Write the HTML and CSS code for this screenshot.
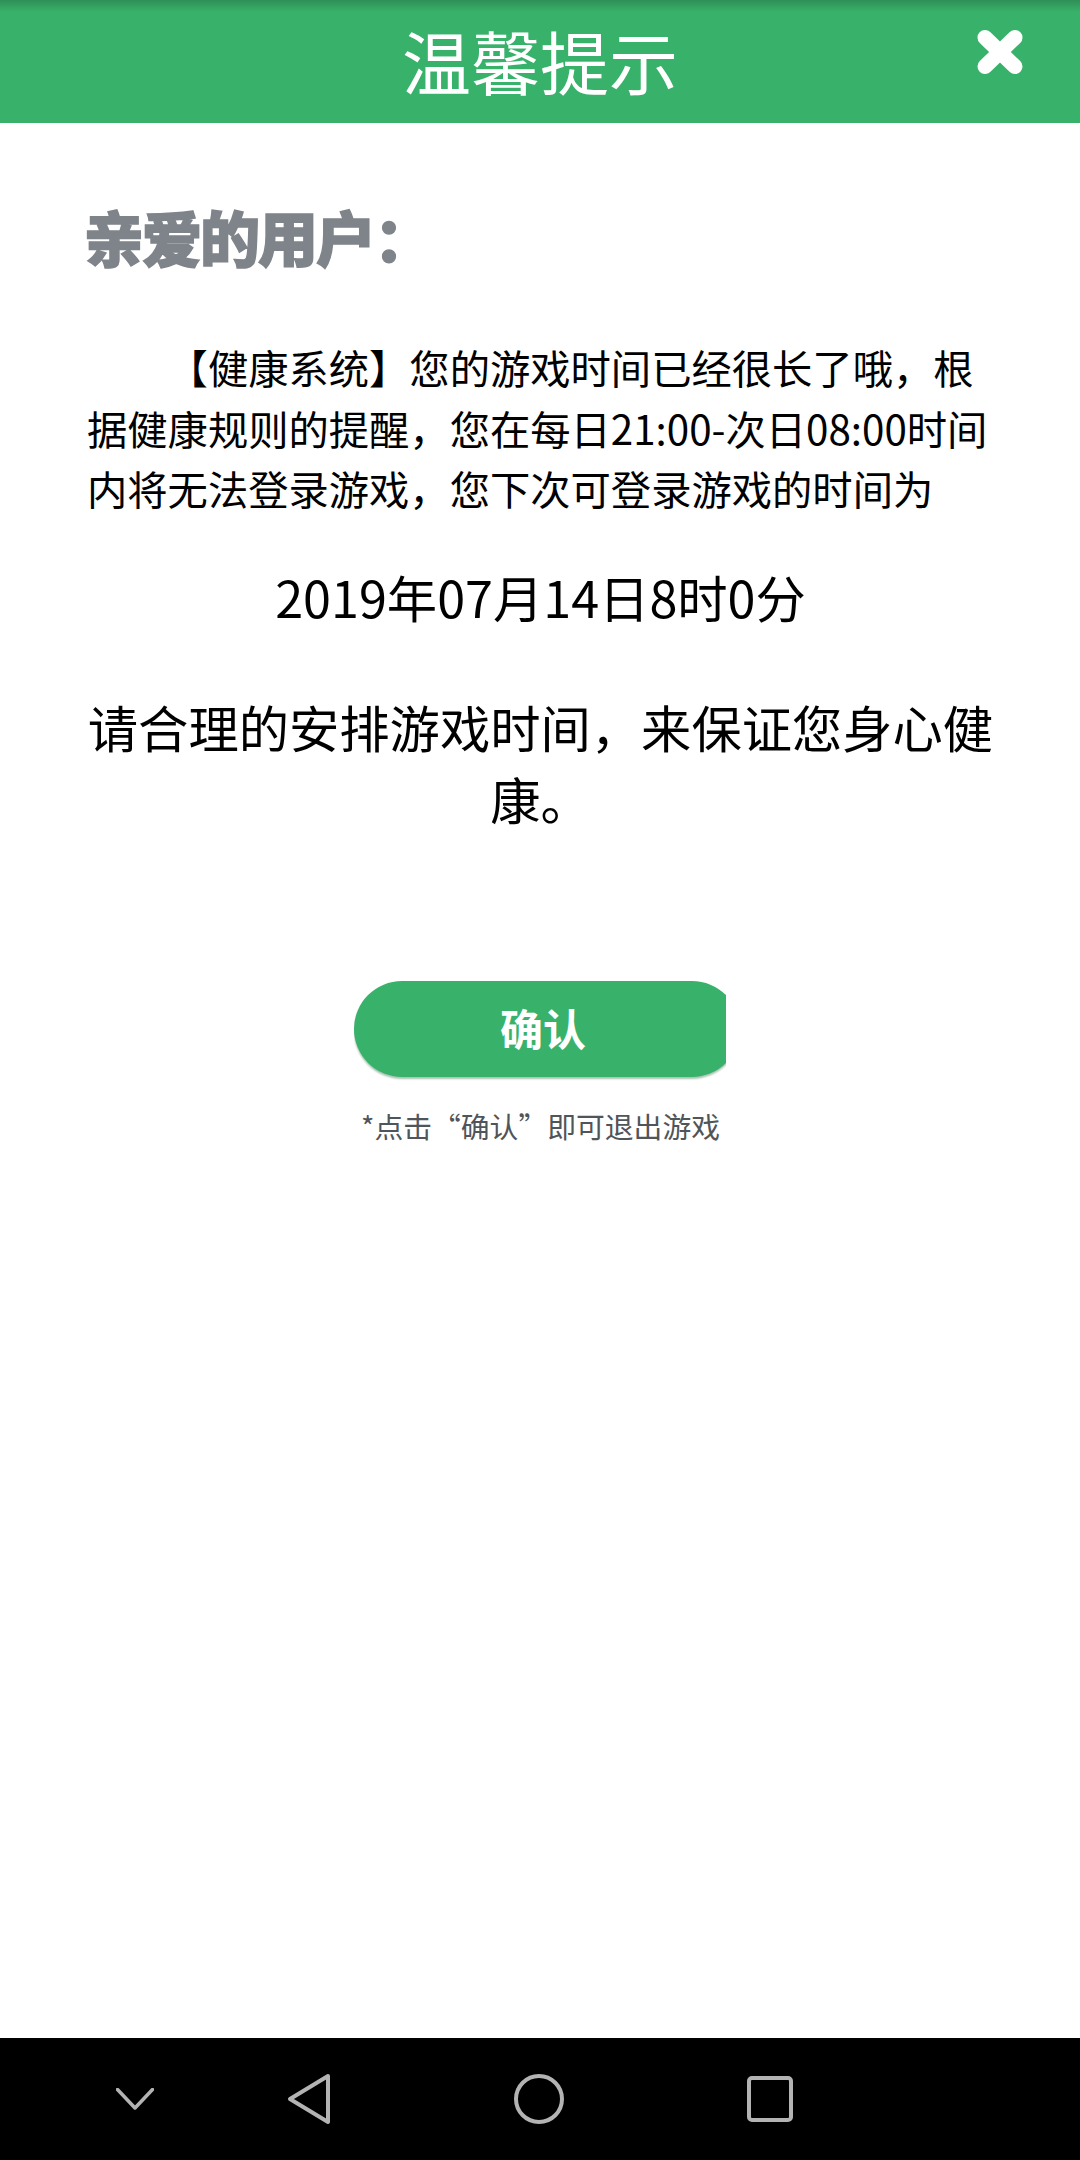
FILE: index.html
```html
<!DOCTYPE html>
<html lang="zh-CN">
<head>
    <meta charset="UTF-8" />
    <title>温馨提示</title>
    <link rel="stylesheet" href="styles.css">
</head>
<body>
    <header class="title-bar">
        <h1>温馨提示</h1>
        <button type="button" class="close-button" aria-label="关闭">
            <svg width="46" height="44" viewBox="0 0 46 44">
                <path d="M8 7.500 L38 36.500 M38 7.500 L8 36.500" fill="none" stroke="#fff" stroke-width="15" stroke-linecap="round" />
            </svg>
        </button>
    </header>

    <main class="content">
        <div class="greeting">亲爱的用户：</div>
        <p class="notice">【健康系统】您的游戏时间已经很长了哦，根据健康规则的提醒，您在每日21:00-次日08:00时间内将无法登录游戏，您下次可登录游戏的时间为</p>
        <p class="next-time">2019年07月14日8时0分</p>
        <p class="advice">请合理的安排游戏时间，来保证您身心健康。</p>
        <div class="confirm-clip">
            <button type="button" class="confirm-button">确认</button>
        </div>
        <p class="hint">*点击“确认”即可退出游戏</p>
    </main>

    <nav class="nav-bar">
        <svg class="nav-hide" width="38" height="22" viewBox="0 0 38 22">
            <path d="M1.500 1.500 L19 20 L36.500 1.500" fill="none" stroke="#b3b3b3" stroke-width="3.500" stroke-linecap="round" stroke-linejoin="round" />
        </svg>
        <svg width="44" height="52" viewBox="0 0 44 52">
            <path d="M41 3 L3 26 L41 49 Z" fill="none" stroke="#b3b3b3" stroke-width="4" stroke-linejoin="round" />
        </svg>
        <svg width="50" height="50" viewBox="0 0 50 50">
            <circle cx="25" cy="25" r="23" fill="none" stroke="#b3b3b3" stroke-width="4" />
        </svg>
        <svg width="46" height="46" viewBox="0 0 46 46">
            <rect x="2" y="2" width="42" height="42" rx="3" fill="none" stroke="#b3b3b3" stroke-width="4" />
        </svg>
    </nav>
</body>
</html>
```

FILE: styles.css
```css
/* 页面 */
html, body {
    margin: 0;
    padding: 0;
}

body {
    width: 1080px;
    height: 2160px;
    display: flex;
    flex-direction: column;
    background: #fff;
    color: #000;
    font-family: "Noto Sans CJK SC", "Noto Sans", sans-serif;
    overflow: hidden;
}

/* 标题栏 */
.title-bar {
    height: 123px;
    flex: none;
    display: flex;
    align-items: center;
    justify-content: center;
    position: relative;
    background: linear-gradient(#2f8f58 0, #38b26a 12px);
}

.title-bar h1 {
    margin: -2px 0 0;
    font-size: 69px;
    font-weight: 400;
    line-height: 123px;
    color: #fff;
}

.close-button {
    position: absolute;
    left: 977px;
    top: 30px;
    width: 46px;
    height: 44px;
    padding: 0;
    border: none;
    background: none;
}

.close-button svg {
    display: block;
}

/* 内容 */
.content {
    flex: 1;
    padding: 0 86px 0 87px;
    display: flex;
    flex-direction: column;
}

.greeting {
    margin: 71px 0 0 -3px;
    font-size: 60px;
    font-weight: 900;
    line-height: 84px;
    letter-spacing: -2px;
    color: #7f848b;
    -webkit-text-stroke: 1.500px #7f848b;
}

.notice {
    margin: 59px 0 0;
    font-size: 40.300px;
    line-height: 60.500px;
    text-indent: 2em;
}

.next-time {
    margin: 41px 0 0;
    font-size: 50.300px;
    line-height: 72px;
    text-align: center;
}

.advice {
    margin: 58px 0 0;
    font-size: 50.300px;
    line-height: 72px;
    text-align: center;
}

/* 确认按钮，右端被裁掉一点 */
.confirm-clip {
    align-self: center;
    width: 372px;
    height: 100px;
    margin: 147px 0 0 -1px;
    overflow: hidden;
}

.confirm-button {
    display: block;
    width: 386px;
    height: 96px;
    padding: 0 8px 4px 0;
    border: none;
    border-radius: 48px;
    background: #38b26a;
    box-shadow: 0 2px 2px #a9c4b3;
    color: #fff;
    font-family: inherit;
    font-size: 43px;
    font-weight: 700;
}

.hint {
    margin: 25px 0 0;
    font-size: 28.800px;
    line-height: 40px;
    text-align: center;
    color: #50555a;
}

/* 底部导航 */
.nav-bar {
    height: 122px;
    flex: none;
    display: flex;
    align-items: center;
    gap: 183px;
    padding-left: 116px;
    background: #000;
}

.nav-bar svg {
    display: block;
}

.nav-hide {
    margin-right: -50px;
}
```
